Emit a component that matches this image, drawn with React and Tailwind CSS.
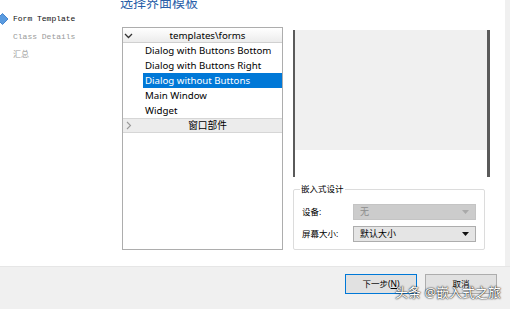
import React from 'react'

const templates = [
  'Dialog with Buttons Bottom',
  'Dialog with Buttons Right',
  'Dialog without Buttons',
  'Main Window',
  'Widget',
]

const ui = { fontFamily: '"Noto Sans", "Noto Sans CJK SC", sans-serif' }
const mono = { fontFamily: '"Liberation Mono", "Noto Sans CJK SC", monospace' }

function Chevron({ down, className }) {
  return (
    <svg width="9" height="9" viewBox="0 0 9 9" className={className}>
      {down ? (
        <path d="M1 3 L4.5 6.5 L8 3" fill="none" stroke="currentColor" strokeWidth="1.3" />
      ) : (
        <path d="M3 1 L6.5 4.5 L3 8" fill="none" stroke="currentColor" strokeWidth="1.1" />
      )}
    </svg>
  )
}

function Combo({ value, disabled }) {
  return (
    <div
      className={`flex h-[16px] w-[123px] items-center justify-between border pl-[6px] pr-[6px] text-[9px] ${
        disabled
          ? 'border-[#c4c4c4] bg-[#cccccc] text-[#8c8c8c]'
          : 'border-[#adadad] bg-[#e5e5e5] text-black'
      }`}
    >
      <span>{value}</span>
      <svg width="7" height="4" viewBox="0 0 7 4">
        <path d="M0 0 H7 L3.5 4 Z" fill={disabled ? '#a9a9a9' : '#111'} />
      </svg>
    </div>
  )
}

export default function App() {
  return (
    <div className="relative h-[309px] w-[510px] overflow-hidden bg-white" style={ui}>
      <div className="flex h-[266px]">
        {/* wizard steps */}
        <div className="flex w-[120px] flex-col pt-[13px] text-[8px]" style={mono}>
          <div className="flex h-[12px] items-center">
            <svg width="11" height="12" viewBox="0 0 11 12" className="-ml-[3px]">
              <path d="M0 6 L5.5 0.5 L11 6 L5.5 11.5 Z" fill="#5a9be0" stroke="#2f73c7" strokeWidth="0.8" />
            </svg>
            <span className="ml-[5px] text-[#111]">Form Template</span>
          </div>
          <div className="mt-[6px] pl-[13px] text-[#9a9a9a]">Class Details</div>
          <div className="mt-[6px] pl-[13px] text-[#9a9a9a]">汇总</div>
        </div>

        {/* page */}
        <div className="flex flex-1 flex-col">
          <div className="-mt-[6px] h-[33px] text-[13px] leading-[16px] text-[#2a5ea8]">选择界面模板</div>

          <div className="flex">
            {/* template tree */}
            <div className="ml-[2px] flex h-[223px] w-[161px] flex-col border border-[#adadad] text-[9.7px] leading-[15px] text-black">
              <div className="flex h-[15px] items-center border-b border-[#d0d0d0] bg-gradient-to-b from-white to-[#ececec]">
                <Chevron down className="ml-[1px] text-[#333]" />
                <span className="flex-1 text-center">templates\forms</span>
              </div>
              {templates.map((t) => (
                <div
                  key={t}
                  className={`ml-[20px] h-[15px] pl-[2px] ${t === 'Dialog without Buttons' ? 'bg-[#0078d7] text-white' : ''}`}
                >
                  {t}
                </div>
              ))}
              <div className="flex h-[15px] items-center border-y border-[#d6d6d6] bg-[#ececec]">
                <Chevron className="ml-[1px] text-[#9a9a9a]" />
                <span className="flex-1 text-center">窗口部件</span>
              </div>
            </div>

            {/* preview + embedded design */}
            <div className="ml-[10px] flex flex-col">
              <div className="mt-[3px] flex h-[147px] w-[197px] border-l-2 border-r-[3px] border-[#5a5a5a]">
                <div className="flex flex-1 flex-col">
                  <div className="h-[120px] bg-[#f0f0f0]" />
                  <div className="flex-1 bg-white" />
                </div>
              </div>

              <div className="relative mt-[12px] h-[61px] w-[192px] rounded-[2px] border border-[#dcdcdc] text-[8.5px] text-black">
                <span className="absolute -top-[7px] left-[6px] bg-white px-[1px] leading-[12px]">嵌入式设计</span>
                <div className="flex flex-col gap-[6px] pl-[8px] pt-[14px]">
                  <div className="flex items-center">
                    <span className="w-[51px]">设备:</span>
                    <Combo value="无" disabled />
                  </div>
                  <div className="flex items-center">
                    <span className="w-[51px]">屏幕大小:</span>
                    <Combo value="默认大小" />
                  </div>
                </div>
              </div>
            </div>
          </div>
        </div>

        <div className="ml-auto w-[5px] bg-[#f0f0f0]" />
      </div>

      {/* footer */}
      <div className="flex h-[43px] justify-end gap-[8px] border-t border-[#e6e6e6] bg-[#f0f0f0] pr-[13px] pt-[7px]">
        <button className="h-[20px] w-[72px] border-[1.5px] border-[#0078d7] bg-[#e1e1e1] text-[8.5px] text-black">
          下一步(<span className="underline">N</span>)
        </button>
        <button className="h-[20px] w-[72px] border border-[#adadad] bg-[#e1e1e1] text-[8.5px] text-black">
          取消
        </button>
      </div>

      {/* watermark */}
      <div
        className="absolute left-[395px] top-[283px] text-[13px] leading-[18px] text-white"
        style={{ textShadow: '0 0 2px #222, 0 0 1px #000' }}
      >
        头条 @嵌入式之旅
      </div>
    </div>
  )
}
